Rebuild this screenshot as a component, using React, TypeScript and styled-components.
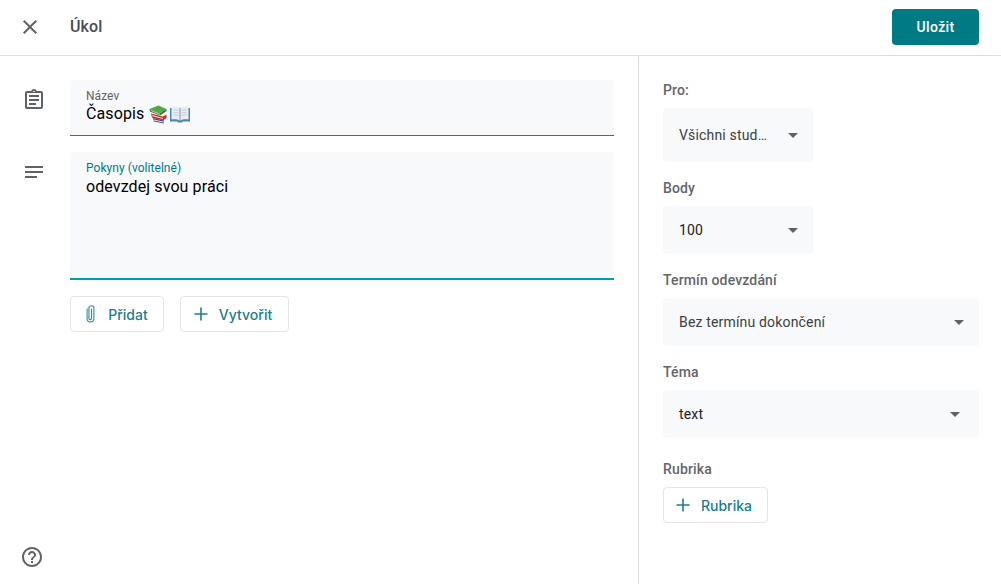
import React from "react";
import styled, { createGlobalStyle } from "styled-components";

const Global = createGlobalStyle`
  html, body { margin: 0; padding: 0; background: #fff; }
  body { font-family: Roboto, "Liberation Sans", sans-serif; }
  * { box-sizing: border-box; }
`;

const Page = styled.div`
  width: 1001px;
  height: 584px;
  display: flex;
  flex-direction: column;
  overflow: hidden;
  background: #fff;
`;

const Header = styled.header`
  height: 56px;
  flex: none;
  display: flex;
  align-items: center;
  border-bottom: 1px solid #dadce0;
  padding: 0 22px 1px 18px;
`;

const IconSlot = styled.span`
  width: 24px;
  height: 24px;
  display: flex;
  color: #5f6368;
  flex: none;
`;

const Title = styled.h1`
  margin: 0 0 0 28px;
  flex: 1;
  font-size: 16px;
  line-height: 24px;
  font-weight: 500;
  letter-spacing: 0.1px;
  color: #4a4d51;
`;

const SaveButton = styled.button`
  width: 87px;
  height: 36px;
  border: 0;
  border-radius: 4px;
  background: #007b83;
  color: #fff;
  font-family: Roboto, sans-serif;
  font-size: 14px;
  font-weight: 500;
  letter-spacing: 0.4px;
`;

const Body = styled.div`
  flex: 1;
  display: flex;
  min-height: 0;
`;

const Main = styled.main`
  width: 639px;
  flex: none;
  border-right: 1px solid #dadce0;
  padding: 24px 24px 15px 22px;
  display: flex;
  flex-direction: column;
`;

const Content = styled.div`
  flex: 1;
  display: flex;
  flex-direction: column;
  gap: 16px;
`;

const Row = styled.div`
  display: flex;
  gap: 24px;
`;

const RowIcon = styled(IconSlot)<{ $top: number }>`
  margin-top: ${(p) => p.$top}px;
`;

const Field = styled.div<{ $height: number; $focused?: boolean }>`
  flex: 1;
  height: ${(p) => p.$height}px;
  background: #f8f9fa;
  border-radius: 4px 4px 0 0;
  padding: 8px 16px 0;
  border-bottom: ${(p) => (p.$focused ? "2px solid #00a0a8" : "1px solid #5f6368")};
`;

const FieldLabel = styled.div<{ $focused?: boolean }>`
  font-size: 12px;
  line-height: 16px;
  letter-spacing: 0.05px;
  color: ${(p) => (p.$focused ? "#007b83" : "#5f6368")};
`;

const FieldValue = styled.div<{ $nudge?: number }>`
  margin-top: ${(p) => p.$nudge ?? 0}px;
  font-size: 16px;
  line-height: 20px;
  letter-spacing: 0.1px;
  color: #000;
  display: flex;
  align-items: center;
`;

const BookStack = styled.svg`
  width: 18px;
  height: 19px;
  flex: none;
  margin: 0 3px 0 1px;
`;

const OpenBookIcon = styled.svg`
  width: 20px;
  height: 17px;
  flex: none;
`;

const Actions = styled.div`
  display: flex;
  gap: 16px;
  margin-left: 48px;
`;

const OutlineButton = styled.button<{ $width: number }>`
  width: ${(p) => p.$width}px;
  height: 36px;
  display: flex;
  align-items: center;
  justify-content: center;
  gap: 9px;
  padding: 0 5px 0 0;
  background: #fff;
  border: 1px solid #e3e5e8;
  border-radius: 4px;
  color: #1a8087;
  font-family: Inter, sans-serif;
  font-size: 14px;
  font-weight: 500;
`;

const HelpSlot = styled(IconSlot)`
  margin-left: -2px;
`;

const Side = styled.aside`
  flex: 1;
  padding: 24px 22px 0 24px;
  display: flex;
  flex-direction: column;
`;

const SideLabel = styled.div<{ $top: number }>`
  margin-top: ${(p) => p.$top}px;
  height: 20px;
  font-size: 14px;
  line-height: 20px;
  font-weight: 500;
  letter-spacing: 0.15px;
  color: #63666b;
`;

const Select = styled.div<{ $width?: number; $height: number; $inset?: number }>`
  margin-top: 8px;
  width: ${(p) => (p.$width ? `${p.$width}px` : "100%")};
  height: ${(p) => p.$height}px;
  background: #f8f9fa;
  border-radius: 4px;
  display: flex;
  align-items: center;
  justify-content: space-between;
  padding: 0 ${(p) => p.$inset ?? 15}px 0 16px;
`;

const SelectText = styled.span<{ $dark?: boolean }>`
  font-size: 14px;
  letter-spacing: 0.17px;
  color: ${(p) => (p.$dark ? "#202124" : "#3c4043")};
`;

const Caret = styled.span`
  width: 0;
  height: 0;
  border-left: 5px solid transparent;
  border-right: 5px solid transparent;
  border-top: 5px solid #5f6368;
`;

const ButtonWrap = styled.div`
  margin-top: 8px;
`;

const Close = () => (
  <svg width="24" height="24" viewBox="0 0 24 24" fill="currentColor">
    <path d="M19 6.41 17.59 5 12 10.59 6.41 5 5 6.41 10.59 12 5 17.59 6.41 19 12 13.41 17.59 19 19 17.59 13.41 12z" />
  </svg>
);
const Assignment = () => (
  <svg width="24" height="24" viewBox="0 0 24 24" fill="currentColor">
    <path d="M7 15h7v2H7zm0-4h10v2H7zm0-4h10v2H7zm12-4h-4.18C14.4 1.84 13.3 1 12 1s-2.4.84-2.82 2H5c-.14 0-.27.01-.4.04-.39.08-.74.28-1.01.55-.18.18-.33.4-.43.64-.1.23-.16.49-.16.77v14c0 .27.06.54.16.78.1.24.25.45.43.64.27.27.62.47 1.01.55.13.02.26.03.4.03h14c1.1 0 2-.9 2-2V5c0-1.1-.9-2-2-2zm-7-.25c.41 0 .75.34.75.75s-.34.75-.75.75-.75-.34-.75-.75.34-.75.75-.75zM19 19H5V5h14v14z" />
  </svg>
);
const Notes = () => (
  <svg width="24" height="24" viewBox="0 0 24 24" fill="currentColor">
    <path d="M3 6h18v2H3zm0 5h18v2H3zm0 5h12v2H3z" />
  </svg>
);
const Help = () => (
  <svg width="24" height="24" viewBox="0 0 24 24" fill="currentColor">
    <path d="M11 18h2v-2h-2v2zm1-16C6.48 2 2 6.48 2 12s4.48 10 10 10 10-4.48 10-10S17.52 2 12 2zm0 18c-4.41 0-8-3.59-8-8s3.59-8 8-8 8 3.59 8 8-3.59 8-8 8zm0-14c-2.21 0-4 1.79-4 4h2c0-1.1.9-2 2-2s2 .9 2 2c0 2-3 1.75-3 5h2c0-2.25 3-2.5 3-5 0-2.21-1.79-4-4-4z" />
  </svg>
);
const Plus = () => (
  <svg width="18" height="18" viewBox="0 0 18 18" fill="none" stroke="#1a8087" strokeWidth="1.6">
    <path d="M9 2.5v13M2.5 9h13" />
  </svg>
);
const Clip = () => (
  <svg width="18" height="18" viewBox="0 0 18 18" fill="none" stroke="#2b939b" strokeWidth="1.1" strokeLinecap="round">
    <path d="M6.5 4v9.6a3.4 3.4 0 0 0 6.8 0V3.4a2.5 2.5 0 0 0-5 0v10a1.3 1.3 0 0 0 2.6 0V4.2" transform="translate(-.4 -.1)" />
  </svg>
);
const Books = () => (
  <BookStack viewBox="0 0 18 19">
    <path d="M4 13 15 15.5v3L5 16.5z" fill="#3f4590" />
    <path d="M5 15l10 2.2" stroke="#e6e7ee" strokeWidth="1" />
    <path d="M2 8.5 14 11.5l3.5-2v3.5L14 15.5 3 12.8z" fill="#c2302c" />
    <path d="M3 10.6 13.8 13.4" stroke="#f4efef" strokeWidth="1" />
    <path d="M0.5 4 9.5 0.5 17.5 4 11 8.5z" fill="#55a844" />
    <path d="M0.5 4 11 8.5l6.5-4.5v2L11 10.5 1 6.4z" fill="#2f7030" />
    <path d="M1.8 5.4 11 9.4" stroke="#eee" strokeWidth="0.8" />
  </BookStack>
);
const OpenBook = () => (
  <OpenBookIcon viewBox="0 0 20 17">
    <path d="M0 2h20V15.5h-7.5v1h-5v-1H0z" fill="#4788b5" />
    <path d="M1.5 .8c3-.6 6-.3 8.5 1 2.5-1.3 5.5-1.6 8.5-1V13.5c-3-.5-6-.3-8.5 1-2.5-1.3-5.5-1.5-8.5-1z" fill="#e9edf1" />
    <path d="M10 1.8V14.5" stroke="#7f8f9e" strokeWidth="0.9" />
    <path d="M3.5 4c1.7-.2 3.4 0 5 .5M3.5 6.5c1.7-.2 3.4 0 5 .5M3.5 9c1.7-.2 3.4 0 5 .5M11.5 4.5c1.5-.5 3.2-.7 5-.5M11.5 7c1.5-.5 3.2-.7 5-.5M11.5 9.5c1.5-.5 3.2-.7 5-.5" stroke="#b7c3ce" strokeWidth="0.7" fill="none" />
  </OpenBookIcon>
);

export default function App() {
  return (
    <Page>
      <Global />
      <Header>
        <IconSlot><Close /></IconSlot>
        <Title>Úkol</Title>
        <SaveButton>Uložit</SaveButton>
      </Header>
      <Body>
        <Main>
          <Content>
            <Row>
              <RowIcon $top={8}><Assignment /></RowIcon>
              <Field $height={56}>
                <FieldLabel>Název</FieldLabel>
                <FieldValue>Časopis&nbsp;<Books /><OpenBook /></FieldValue>
              </Field>
            </Row>
            <Row>
              <RowIcon $top={8}><Notes /></RowIcon>
              <Field $height={128} $focused>
                <FieldLabel $focused>Pokyny (volitelné)</FieldLabel>
                <FieldValue $nudge={1}>odevzdej svou práci</FieldValue>
              </Field>
            </Row>
            <Actions>
              <OutlineButton $width={94}><Clip />Přidat</OutlineButton>
              <OutlineButton $width={109}><Plus />Vytvořit</OutlineButton>
            </Actions>
          </Content>
          <HelpSlot><Help /></HelpSlot>
        </Main>
        <Side>
          <SideLabel $top={0}>Pro:</SideLabel>
          <Select $width={150} $height={54}>
            <SelectText>Všichni stud…</SelectText>
            <Caret />
          </Select>
          <SideLabel $top={16}>Body</SideLabel>
          <Select $width={150} $height={48}>
            <SelectText $dark>100</SelectText>
            <Caret />
          </Select>
          <SideLabel $top={16}>Termín odevzdání</SideLabel>
          <Select $height={48}>
            <SelectText>Bez termínu dokončení</SelectText>
            <Caret />
          </Select>
          <SideLabel $top={16}>Téma</SideLabel>
          <Select $height={48} $inset={19}>
            <SelectText $dark>text</SelectText>
            <Caret />
          </Select>
          <SideLabel $top={21}>Rubrika</SideLabel>
          <ButtonWrap>
            <OutlineButton $width={105}><Plus />Rubrika</OutlineButton>
          </ButtonWrap>
        </Side>
      </Body>
    </Page>
  );
}
